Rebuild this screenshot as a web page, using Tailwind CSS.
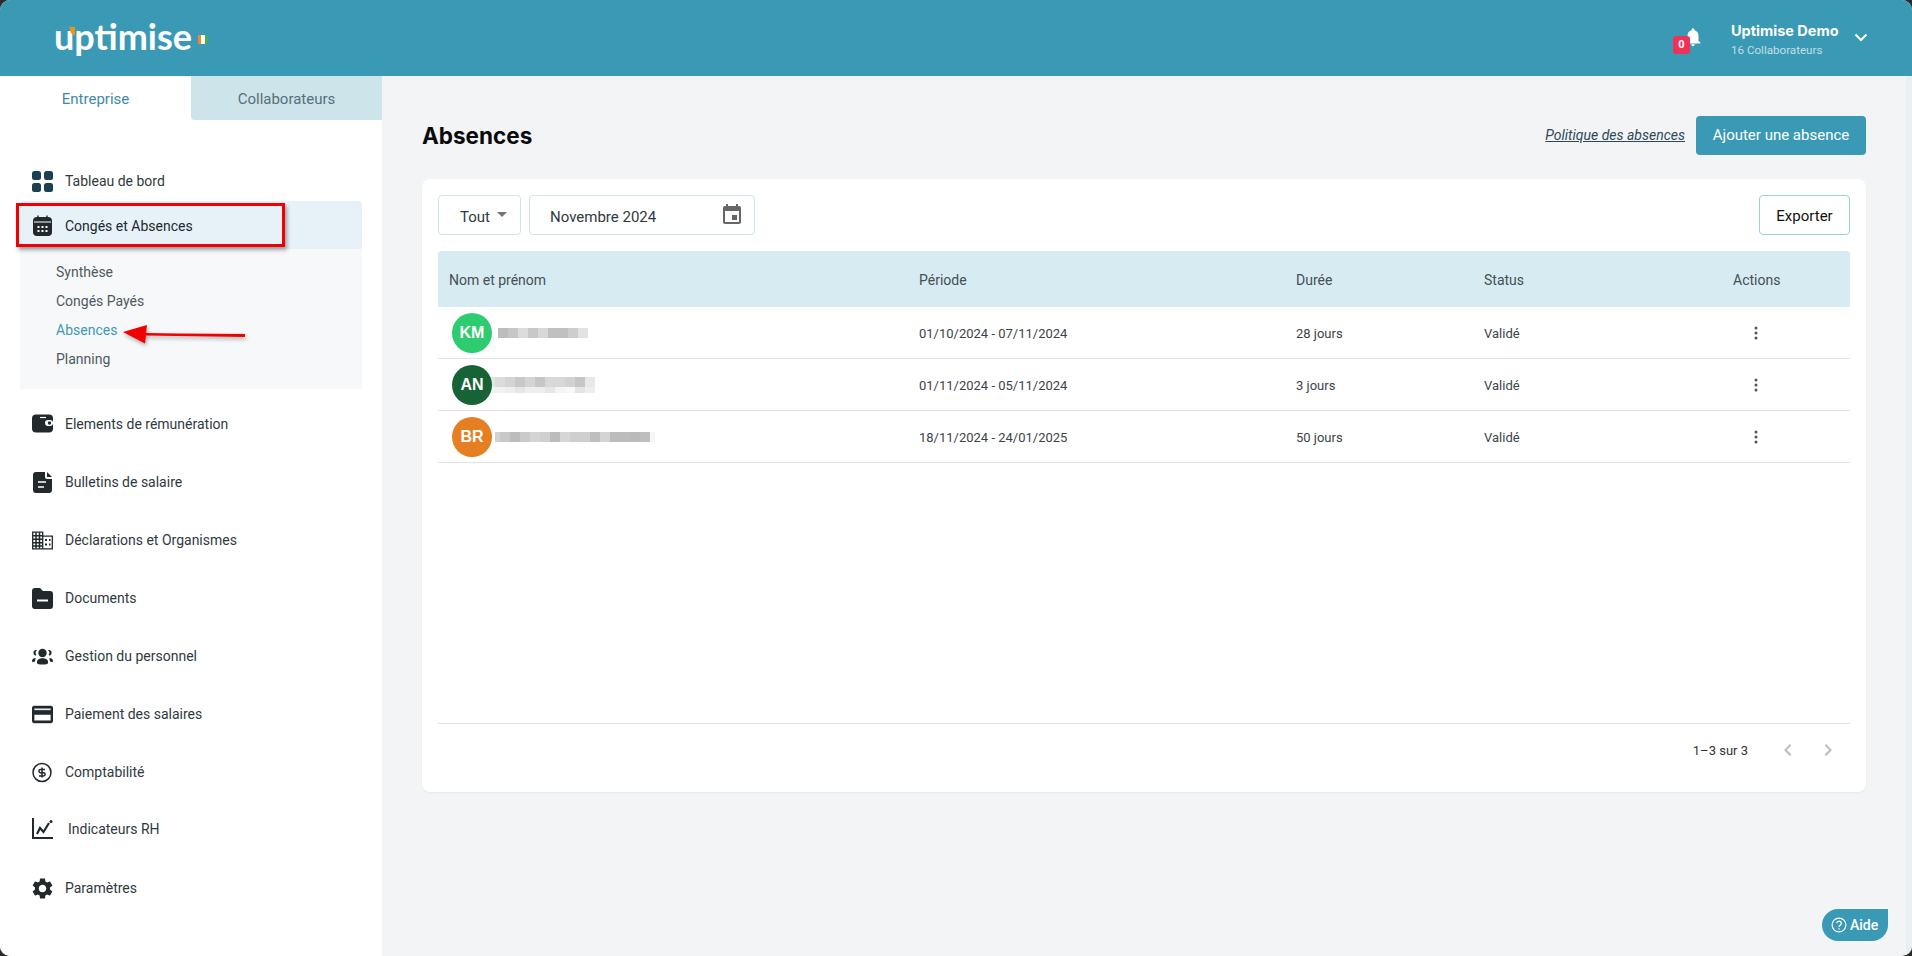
<!DOCTYPE html>
<html lang="fr">
<head>
<meta charset="utf-8">
<title>Uptimise – Absences</title>
<script src="https://cdn.jsdelivr.net/npm/@tailwindcss/browser@4"></script>
</head>
<body class="m-0 bg-[#2b2b2b]">
<div class="relative w-[1912px] h-[956px] overflow-hidden rounded-[10px] flex flex-col bg-[#f2f4f6] font-['Roboto',sans-serif]">
  <!-- Header -->
  <header class="h-[76px] shrink-0 bg-[#3a9ab5] flex items-center pl-[54px] pr-[43px]">
    <div class="relative flex items-start -mt-[1px]">
      <span class="font-['Lato',sans-serif] font-bold text-white text-[36px] leading-[38px] -mt-[3px]">uptimise</span>
      <svg class="absolute left-[14px] top-[7px] w-[7px] h-[9px]" viewBox="0 0 7 9"><path fill="#e8941f" d="M1 0h6v9L3 6z"/></svg>
      <div class="flex ml-[6px] mt-[15px] h-[9px]">
        <span class="w-[3px] bg-[#f08a24]"></span><span class="w-[4px] bg-white"></span><span class="w-[3px] bg-[#3fae5a]"></span>
      </div>
    </div>
    <div class="ml-auto flex items-center">
      <div class="relative w-[36px] h-[36px] mr-[22px]">
        <svg class="absolute left-[9px] top-[6px] w-[22px] h-[22px]" viewBox="0 0 24 24" fill="#fff"><path d="M12 22c1.100 0 2-.9 2-2h-4c0 1.100.9 2 2 2zm6-6v-5c0-3.070-1.640-5.640-4.500-6.320V4c0-.83-.67-1.500-1.500-1.500s-1.500.67-1.500 1.500v.68C7.630 5.360 6 7.920 6 11v5l-2 2v1h16v-1l-2-2z"/></svg>
        <span class="absolute left-0 top-[16px] w-[17px] h-[18px] rounded-[3px] bg-[#f0325a] text-white text-[11px] font-bold leading-[18px] text-center">0</span>
      </div>
      <div class="flex flex-col w-[118px] pt-[3px]">
        <span class="text-white text-[14.5px] font-bold leading-[18px] font-['Inter',sans-serif]">Uptimise Demo</span>
        <span class="text-[#c3dde5] text-[11.6px] leading-[14px] mt-[3px]">16 Collaborateurs</span>
      </div>
      <svg class="w-[16px] h-[16px] ml-[4px] -mt-[2px]" viewBox="0 0 16 16" fill="none" stroke="#fff" stroke-width="2"><path d="M2.500 5.500 8 11l5.500-5.500"/></svg>
    </div>
  </header>

  <div class="flex flex-1 min-h-0">
    <!-- Sidebar -->
    <aside class="w-[382px] shrink-0 bg-white flex flex-col">
      <div class="flex h-[44px] text-[15px]">
        <div class="w-[191px] flex items-center justify-center text-[#3f8ba3] pt-[3px]">Entreprise</div>
        <div class="w-[191px] flex items-center justify-center text-[#56707a] bg-[#cde4ea] rounded-bl-[4px] pt-[3px]">Collaborateurs</div>
      </div>
      <nav class="mt-[37px] text-[14px] text-[#2f3a40]">
        <a class="flex items-center h-[48px] pl-[32px]">
          <svg class="w-[21px] h-[21px] shrink-0" viewBox="0 0 21 21" fill="#1d3f52"><rect x="0" y="0" width="9" height="9" rx="2.500"/><rect x="12" y="0" width="9" height="9" rx="2.500"/><rect x="0" y="12" width="9" height="9" rx="2.500"/><rect x="12" y="12" width="9" height="9" rx="2.500"/></svg>
          <span class="ml-[12px] pt-[1px]">Tableau de bord</span>
        </a>
        <div class="mx-[20px] -mt-[4px] w-[342px] rounded-t-[4px] overflow-hidden">
          <a class="flex items-center h-[48px] pl-[12px] bg-[#e6f2f8] text-[#22282c]">
            <svg class="w-[21px] h-[21px] shrink-0" viewBox="0 0 21 21"><rect x="1" y="2" width="19" height="19" rx="4" fill="#22282c"/><path d="M6 .5v3M15 .5v3" stroke="#22282c" stroke-width="1.400"/><path fill="#fff" d="M2 6.500h17v1H2zM5.500 11h2v2h-2zm4 0h2v2h-2zm4 0h2v2h-2zM5.500 15h2v2h-2zm4 0h2v2h-2zm4 0h2v2h-2z"/></svg>
            <span class="ml-[12px] pt-[2px]">Congés et Absences</span>
          </a>
          <div class="h-[140px] bg-[#f7f8fa] pl-[36px] pt-[9px] flex flex-col text-[#4d5a61]">
            <a class="h-[29px] flex items-center">Synthèse</a>
            <a class="h-[29px] flex items-center">Congés Payés</a>
            <a class="h-[29px] flex items-center text-[#4298b4]">Absences</a>
            <a class="h-[29px] flex items-center">Planning</a>
          </div>
        </div>
        <div class="mt-[6px] flex flex-col pl-[32px]">
          <a class="flex items-center h-[58px]">
            <svg class="w-[21px] h-[21px] shrink-0" viewBox="0 0 21 21"><rect y="0.500" width="21" height="18" rx="4" fill="#22282c"/><path d="M8 3.500h6" stroke="#fff" stroke-width="1.200"/><rect x="13" y="6" width="8" height="6" rx="3" fill="#fff"/><circle cx="17.500" cy="9" r="1.700" fill="#22282c"/></svg>
            <span class="ml-[12px]">Elements de rémunération</span>
          </a>
          <a class="flex items-center h-[58px]">
            <svg class="w-[21px] h-[21px] shrink-0" viewBox="0 0 21 21"><path fill="#22282c" d="M4 0h9v5a2 2 0 0 0 2 2h5v11a3 3 0 0 1-3 3H4a3 3 0 0 1-3-3V3a3 3 0 0 1 3-3z"/><path fill="#22282c" d="M15 0l5 5h-5z"/><path d="M6 10h8M6 15h6" stroke="#fff" stroke-width="1.500"/></svg>
            <span class="ml-[12px]">Bulletins de salaire</span>
          </a>
          <a class="flex items-center h-[58px]">
            <svg class="w-[21px] h-[21px] shrink-0" viewBox="0 0 21 18" fill="none" stroke="#22282c"><path stroke-width="1.300" d="M.7.700h10v16.600H.7zM10.700 4.700h9.600v12.600H.7"/><path stroke-width="1.500" d="M4 1v16M7.500 1v16M1 4.300h9.500M1 7.800h9.500M1 11.300h9.500M1 14.500h9.500"/><path stroke-width="1.800" d="M13 8.500h2M17 8.500h1.500M13 13h2M17 13h1.500"/></svg>
            <span class="ml-[12px]">Déclarations et Organismes</span>
          </a>
          <a class="flex items-center h-[58px]">
            <svg class="w-[21px] h-[21px] shrink-0" viewBox="0 0 21 21"><path fill="#22282c" d="M3 0h5l3 3h7a3 3 0 0 1 3 3v12a3 3 0 0 1-3 3H3a3 3 0 0 1-3-3V3a3 3 0 0 1 3-3z"/><path d="M5 12.500h11" stroke="#fff" stroke-width="2"/></svg>
            <span class="ml-[12px]">Documents</span>
          </a>
          <a class="flex items-center h-[58px]">
            <svg class="w-[21px] h-[21px] shrink-0" viewBox="0 0 21 16" fill="#22282c"><circle cx="10.500" cy="4.500" r="4.200"/><path d="M5 13c0-2 2.500-3.300 5.500-3.300S16 11 16 13v1.500c0 1-2.500 1.500-5.500 1.500S5 15.500 5 14.500z"/><path d="M3.400 1.500a3 3 0 0 0 0 5.700l1-1a3 3 0 0 1 .8-4.700zM17.600 1.500a3 3 0 0 1 0 5.700l-1-1a3 3 0 0 0-.8-4.700zM0 12.500c0-1.700 1.500-3 3.700-3l-.7 3.500-2.500.8zM21 12.500c0-1.700-1.500-3-3.700-3l.7 3.500 2.500.8z"/></svg>
            <span class="ml-[12px]">Gestion du personnel</span>
          </a>
          <a class="flex items-center h-[58px]">
            <svg class="w-[21px] h-[21px] shrink-0" viewBox="2 4 20 16" fill="#22282c" stroke="#22282c" stroke-width="0.500"><path d="M20 4H4c-1.110 0-1.990.890-1.990 2L2 18c0 1.110.890 2 2 2h16c1.110 0 2-.890 2-2V6c0-1.110-.890-2-2-2zm0 14H4v-6h16v6zm0-10H4V6h16v2z"/></svg>
            <span class="ml-[12px]">Paiement des salaires</span>
          </a>
          <a class="flex items-center h-[58px]">
            <svg class="w-[21px] h-[21px] shrink-0" viewBox="0 0 21 21" fill="none" stroke="#22282c"><circle cx="10" cy="10.500" r="9" stroke-width="1.500"/><path stroke-width="1.500" d="M13 7.500H8.500a1.500 1.500 0 0 0 0 3.200h3a1.500 1.500 0 0 1 0 3.300H7M10 5.500v10"/></svg>
            <span class="ml-[12px]">Comptabilité</span>
          </a>
          <a class="flex items-center h-[57px] mb-[1px]">
            <svg class="w-[21px] h-[21px] shrink-0 -mt-[2px]" viewBox="0 0 21 21" fill="none" stroke="#22282c"><path stroke-width="2" d="M1 0v20h20"/><path stroke-width="2.200" d="M5 16l3-6 3.500 4L17 5"/><circle cx="19" cy="3.500" r="1.500" fill="#22282c" stroke="none"/></svg>
            <span class="ml-[15px]">Indicateurs RH</span>
          </a>
          <a class="flex items-center h-[58px]">
            <svg class="w-[21px] h-[21px] shrink-0" viewBox="2.500 2 19 20" fill="#22282c"><path d="M19.140 12.940c.04-.3.060-.61.060-.94 0-.32-.02-.64-.07-.94l2.030-1.580c.18-.14.23-.41.120-.61l-1.920-3.320c-.12-.22-.37-.29-.59-.22l-2.390.960c-.5-.38-1.030-.7-1.620-.94l-.36-2.540c-.04-.24-.24-.41-.48-.41h-3.840c-.24 0-.43.170-.47.410l-.36 2.540c-.59.240-1.130.570-1.620.940l-2.390-.96c-.22-.08-.47 0-.59.220L2.740 8.870c-.12.210-.08.470.12.610l2.030 1.580c-.05.300-.09.630-.09.940s.02.640.07.940l-2.030 1.580c-.18.140-.23.410-.12.610l1.920 3.320c.12.220.37.290.59.220l2.390-.96c.5.380 1.030.7 1.620.94l.36 2.540c.05.240.24.410.48.410h3.840c.24 0 .44-.17.47-.41l.36-2.540c.59-.24 1.130-.56 1.620-.94l2.390.96c.22.080.47 0 .59-.22l1.920-3.320c.12-.22.070-.47-.12-.61l-2.010-1.580zM12 15.600c-1.980 0-3.600-1.620-3.600-3.600s1.620-3.600 3.600-3.600 3.600 1.620 3.600 3.600-1.620 3.600-3.600 3.600z"/></svg>
            <span class="ml-[12px]">Paramètres</span>
          </a>
        </div>
      </nav>
    </aside>

    <!-- Main -->
    <main class="flex-1 min-w-0 pl-[40px] pr-[40px]">
      <div class="flex items-center h-[103px] pt-[16px]">
        <h1 class="font-['Inter',sans-serif] font-bold text-[22.5px] text-[#0b0b0b] pt-[1px]">Absences</h1>
        <a class="ml-auto italic underline text-[14px] text-[#2f4a57]">Politique des absences</a>
        <button class="ml-[11px] w-[170px] h-[39px] rounded-[4px] bg-[#3a9ab5] text-white text-[15px]">Ajouter une absence</button>
      </div>
      <section class="w-[1444px] h-[613px] bg-white rounded-[8px] shadow-[0_1px_2px_rgba(0,0,0,0.05)] px-[16px] pt-[16px] flex flex-col">
        <div class="flex h-[40px] text-[15px]">
          <div class="w-[83px] border border-[#cfe3ea] rounded-[4px] flex items-center pl-[21px] text-[#2f3a40]"><span class="pt-[4px]">Tout</span>
            <span class="ml-[7px] w-0 h-0 border-x-[5px] border-x-transparent border-t-[5px] border-t-[#757575] -mt-[2px]"></span>
          </div>
          <div class="ml-[8px] w-[226px] border border-[#cfe3ea] rounded-[4px] flex items-center pl-[20px] pr-[10px] text-[#2f3a40]"><span class="pt-[4px]">Novembre 2024</span>
            <svg class="ml-auto w-[24px] h-[24px]" viewBox="0 0 24 24" fill="#666"><path d="M17 12h-5v5h5v-5zM16 1v2H8V1H6v2H5c-1.110 0-1.990.9-1.990 2L3 19c0 1.100.890 2 2 2h14c1.100 0 2-.9 2-2V5c0-1.100-.9-2-2-2h-1V1h-2zm3 18H5V8h14v11z"/></svg>
          </div>
          <button class="ml-auto w-[91px] border border-[#9fcfdc] rounded-[4px] text-[15px] text-[#111] pt-[2px]">Exporter</button>
        </div>
        <div class="mt-[16px] text-[14px]">
          <div class="grid grid-cols-[470px_377px_188px_1fr_117px] h-[56px] items-center bg-[#d7ebf2] rounded-t-[4px] text-[#454f54]">
            <span class="pl-[11px] pt-[2px]">Nom et prénom</span><span class="pl-[11px] pt-[2px]">Période</span><span class="pl-[11px] pt-[2px]">Durée</span><span class="pl-[11px] pt-[2px]">Status</span><span class="pt-[2px]">Actions</span>
          </div>
          <div class="grid grid-cols-[470px_377px_188px_1fr_117px] h-[52px] items-center border-b border-[#dfe1e3] text-[13px] text-[#3c4448]">
            <div class="flex items-center pl-[14px]">
              <span class="w-[40px] h-[40px] rounded-full bg-[#2ecc71] text-white text-[16px] font-bold font-['Liberation_Sans',sans-serif] flex items-center justify-center">KM</span>
              <span class="flex h-[10px] ml-[6px]"><i class="w-[10px] bg-[#bcbcbc]"></i><i class="w-[10px] bg-[#c6c6c6]"></i><i class="w-[10px] bg-[#dcdcdc]"></i><i class="w-[10px] bg-[#c8c8c8]"></i><i class="w-[10px] bg-[#d8d8d8]"></i><i class="w-[20px] bg-[#c0c0c0]"></i><i class="w-[10px] bg-[#cdcdcd]"></i><i class="w-[10px] bg-[#e2e2e2]"></i></span>
            </div>
            <span class="pl-[11px] pt-[2px]">01/10/2024 - 07/11/2024</span><span class="pl-[11px] pt-[2px]">28 jours</span><span class="pl-[11px] pt-[2px]">Validé</span>
            <svg class="w-[16px] h-[16px] ml-[15px]" viewBox="0 0 16 16" fill="#555"><circle cx="8" cy="3" r="1.500"/><circle cx="8" cy="8" r="1.500"/><circle cx="8" cy="13" r="1.500"/></svg>
          </div>
          <div class="grid grid-cols-[470px_377px_188px_1fr_117px] h-[52px] items-center border-b border-[#dfe1e3] text-[13px] text-[#3c4448]">
            <div class="flex items-center pl-[14px]">
              <span class="relative z-10 w-[40px] h-[40px] rounded-full bg-[#176336] text-white text-[16px] font-bold font-['Liberation_Sans',sans-serif] flex items-center justify-center">AN</span>
              <span class="flex flex-col h-[16px] ml-[-2px]">
                <span class="flex h-[10px]"><i class="w-[5px] bg-[#e4e4e4]"></i><i class="w-[10px] bg-[#dbdbdb]"></i><i class="w-[10px] bg-[#d4d4d4]"></i><i class="w-[10px] bg-[#c8c8c8]"></i><i class="w-[10px] bg-[#d4d4d4]"></i><i class="w-[10px] bg-[#c6c6c6]"></i><i class="w-[20px] bg-[#d8d8d8]"></i><i class="w-[10px] bg-[#d2d2d2]"></i><i class="w-[10px] bg-[#c6c6c6]"></i><i class="w-[10px] bg-[#e8e8e8]"></i></span>
                <span class="flex h-[6px]"><i class="w-[15px] bg-[#f2f2f2]"></i><i class="w-[10px] bg-[#eeeeee]"></i><i class="w-[10px] bg-[#e6e6e6]"></i><i class="w-[20px] bg-[#eeeeee]"></i><i class="w-[10px] bg-[#e6e6e6]"></i><i class="w-[10px] bg-[#f4f4f4]"></i><i class="w-[10px] bg-[#f8f8f8]"></i><i class="w-[10px] bg-[#e4e4e4]"></i><i class="w-[10px] bg-[#eeeeee]"></i></span>
              </span>
            </div>
            <span class="pl-[11px] pt-[2px]">01/11/2024 - 05/11/2024</span><span class="pl-[11px] pt-[2px]">3 jours</span><span class="pl-[11px] pt-[2px]">Validé</span>
            <svg class="w-[16px] h-[16px] ml-[15px]" viewBox="0 0 16 16" fill="#555"><circle cx="8" cy="3" r="1.500"/><circle cx="8" cy="8" r="1.500"/><circle cx="8" cy="13" r="1.500"/></svg>
          </div>
          <div class="grid grid-cols-[470px_377px_188px_1fr_117px] h-[52px] items-center border-b border-[#dfe1e3] text-[13px] text-[#3c4448]">
            <div class="flex items-center pl-[14px]">
              <span class="w-[40px] h-[40px] rounded-full bg-[#e67e22] text-white text-[16px] font-bold font-['Liberation_Sans',sans-serif] flex items-center justify-center">BR</span>
              <span class="flex h-[10px] ml-[3px]"><i class="w-[5px] bg-[#d2d2d2]"></i><i class="w-[10px] bg-[#c8c8c8]"></i><i class="w-[10px] bg-[#bcbcbc]"></i><i class="w-[10px] bg-[#cacaca]"></i><i class="w-[10px] bg-[#d4d4d4]"></i><i class="w-[10px] bg-[#d0d0d0]"></i><i class="w-[10px] bg-[#bcbcbc]"></i><i class="w-[10px] bg-[#d6d6d6]"></i><i class="w-[20px] bg-[#cfcfcf]"></i><i class="w-[10px] bg-[#bebebe]"></i><i class="w-[10px] bg-[#d4d4d4]"></i><i class="w-[20px] bg-[#bcbcbc]"></i><i class="w-[10px] bg-[#bababa]"></i><i class="w-[10px] bg-[#bebebe]"></i><i class="w-[5px] bg-[#f6f6f6]"></i></span>
            </div>
            <span class="pl-[11px] pt-[2px]">18/11/2024 - 24/01/2025</span><span class="pl-[11px] pt-[2px]">50 jours</span><span class="pl-[11px] pt-[2px]">Validé</span>
            <svg class="w-[16px] h-[16px] ml-[15px]" viewBox="0 0 16 16" fill="#555"><circle cx="8" cy="3" r="1.500"/><circle cx="8" cy="8" r="1.500"/><circle cx="8" cy="13" r="1.500"/></svg>
          </div>
        </div>
        <div class="mt-auto h-[69px] border-t border-[#dfe1e3] flex items-center justify-end pr-[10px] pb-[14px] text-[13px] text-[#333]">
          <span>1–3 sur 3</span>
          <svg class="w-[24px] h-[24px] ml-[28px] -mt-[2px]" viewBox="0 0 24 24" fill="#bdbdbd"><path d="M15.410 7.410 14 6l-6 6 6 6 1.410-1.410L10.830 12z"/></svg>
          <svg class="w-[24px] h-[24px] ml-[16px] -mt-[2px]" viewBox="0 0 24 24" fill="#bdbdbd"><path d="M10 6 8.590 7.410 13.170 12l-4.580 4.590L10 18l6-6z"/></svg>
        </div>
      </section>
    </main>
    <div class="w-[6px] shrink-0 bg-[#e8f0f2]"></div>
  </div>

  <!-- Help button -->
  <button class="absolute left-[1822px] top-[909px] w-[66px] h-[32px] bg-[#3a9ab5] rounded-l-[16px] rounded-br-[16px] text-white flex items-center pl-[9px] text-[14px] font-medium">
    <svg class="w-[16px] h-[16px] shrink-0" viewBox="0 0 16 16" fill="none" stroke="#fff" stroke-width="1.200"><circle cx="8" cy="8" r="6.900"/><path d="M5.800 6.300a2.200 2.200 0 1 1 3.400 1.900c-.8.500-1.200.9-1.200 1.800" stroke-width="1.300"/><path d="M8 11.200v1.300" stroke-width="1.400"/></svg>
    <span class="ml-[3px]">Aide</span>
  </button>

  <!-- Screenshot annotations -->
  <div class="absolute left-[16px] top-[203px] w-[269px] h-[44px] border-[3px] border-[#f00000] shadow-[2px_3px_4px_rgba(0,0,0,0.35)]"></div>
  <svg class="absolute left-[120px] top-[320px] w-[132px] h-[28px] drop-shadow-[1px_2px_2px_rgba(0,0,0,0.35)]" viewBox="0 0 132 28"><path fill="#f00000" d="M3 12 27 5l-1 8 31 .5 68 .5 0 3-68-1-31-.5-1 8z"/></svg>
</div>
</body>
</html>
